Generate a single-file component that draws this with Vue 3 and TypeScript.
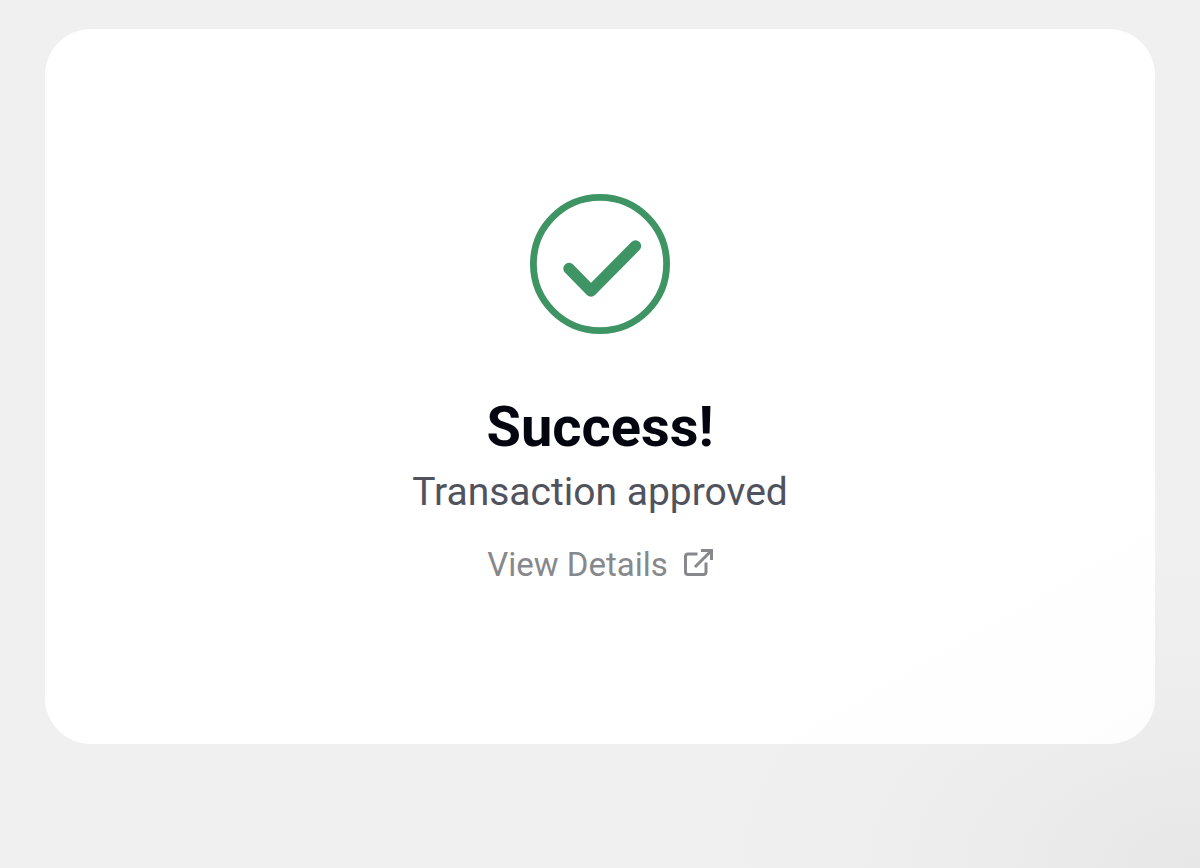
<script setup lang="ts">
interface Result {
  title: string
  message: string
  linkLabel: string
}

const result: Result = {
  title: 'Success!',
  message: 'Transaction approved',
  linkLabel: 'View Details',
}
</script>

<template>
  <main class="page">
    <section class="card" aria-labelledby="result-title">
      <svg class="status" viewBox="0 0 140 140" aria-hidden="true">
        <circle cx="70" cy="70" r="66.6" stroke-width="6.8" />
        <path d="M39 74.5 61 97 105.5 52" stroke-width="11.4" />
      </svg>
      <h1 id="result-title" class="title">{{ result.title }}</h1>
      <p class="message">{{ result.message }}</p>
      <a class="details" href="#details">
        <span>{{ result.linkLabel }}</span>
        <svg class="external" viewBox="0 0 30 30" aria-hidden="true">
          <path d="M14.5 6H5Q2.5 6 2.500 8.500V24Q2.500 26.500 5 26.500H20.500Q23 26.500 23 24V14.500" />
          <path d="M18 2.500H28.500V12M28 3 12 19" />
        </svg>
      </a>
    </section>
  </main>
</template>

<style>
body {
  margin: 0;
}
</style>

<style scoped>
.page {
  box-sizing: border-box;
  min-height: 100vh;
  padding: 29px 45px 124px;
  display: flex;
  background: radial-gradient(ellipse 500px 320px at 100% 100%, #e7e7e7, #eeeeee 60%, #f0f0f0);
  font-family: Roboto, "Liberation Sans", sans-serif;
}

.card {
  box-sizing: border-box;
  flex: 1;
  display: flex;
  flex-direction: column;
  align-items: center;
  padding: 165px 24px 152px;
  border-radius: 46px;
  background: linear-gradient(150deg, #ffffff 80%, #fdfdfd);
}

.status {
  width: 140px;
  height: 140px;
  fill: none;
  stroke: #3f9464;
  stroke-linecap: round;
  stroke-linejoin: round;
}

.title {
  margin: 61px 0 0;
  font-size: 56px;
  line-height: 64px;
  font-weight: 700;
  color: #04060f;
}

.message {
  margin: 9px 0 0;
  font-size: 39px;
  line-height: 48px;
  color: #50535d;
}

.details {
  display: flex;
  align-items: center;
  gap: 15px;
  margin-top: 29px;
  font-size: 33px;
  line-height: 40px;
  color: #86888c;
  text-decoration: none;
}

.external {
  width: 30px;
  height: 30px;
  margin-bottom: 4px;
  fill: none;
  stroke: currentColor;
  stroke-width: 3;
}
</style>
